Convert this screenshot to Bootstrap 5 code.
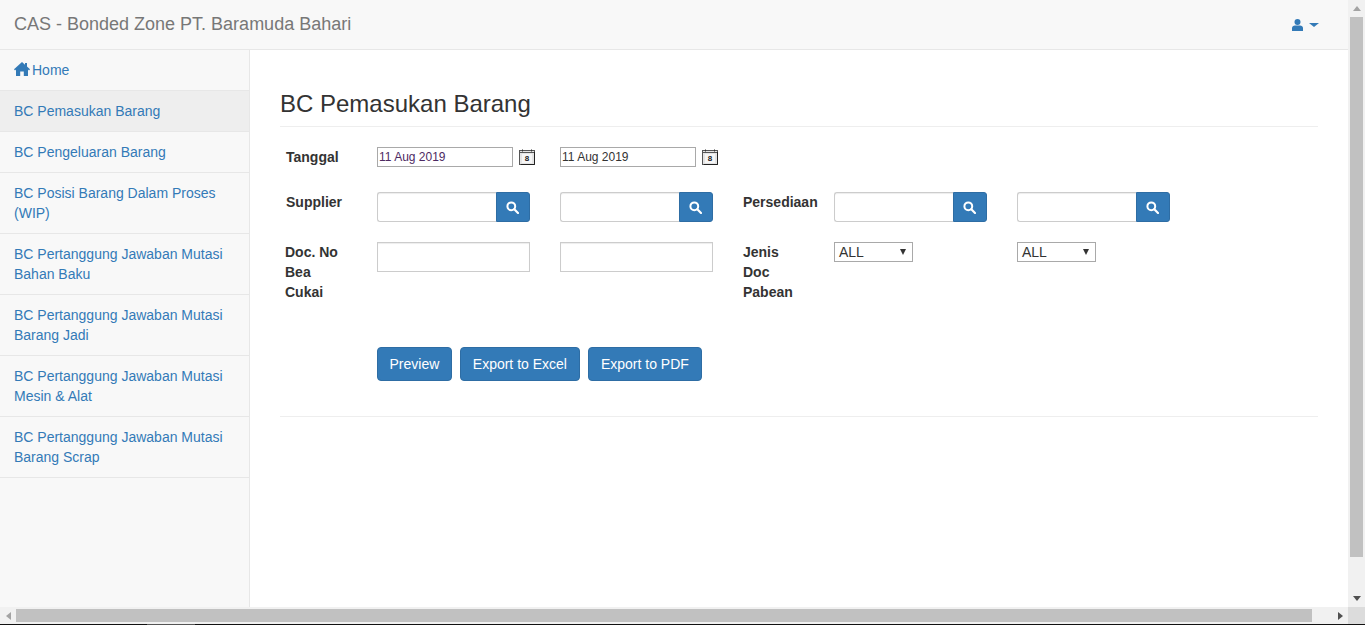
<!DOCTYPE html>
<html lang="en">
<head>
  <meta charset="UTF-8"/>
  <meta name="viewport" content="width=device-width, initial-scale=1.0"/>
  <title>CAS - Bonded Zone</title>
  <link href="https://cdn.jsdelivr.net/npm/bootstrap@5.3.0/dist/css/bootstrap.min.css" rel="stylesheet"/>
  <style>
    html, body { height: 100%; overflow: hidden; }
    body { font-family: "Liberation Sans", Arial, sans-serif; font-size: 14px; line-height: 20px; color: #333; background: #fff; }
    a { color: #337ab7; text-decoration: none; }

    .app-shell { height: 625px; }
    .upper-part { min-height: 0; }
    .page-area { width: 1348px; min-height: 0; }
    .top-bar { height: 50px; background: #f8f8f8; border-bottom: 1px solid #e7e7e7; padding: 0 29px 0 14px; }
    .top-brand { font-size: 18px; color: #777; padding-bottom: 2px; }
    .user-link { color: #337ab7; }
    .caret-down { width: 0; height: 0; border-left: 5px solid transparent; border-right: 5px solid transparent; border-top: 4px solid #337ab7; margin-left: 6px; }

    .lower-part { min-height: 0; }
    .side-nav { width: 250px; background: #f8f8f8; border-right: 1px solid #e7e7e7; }
    .side-nav a { display: block; padding: 10px 14px; border-bottom: 1px solid #e7e7e7; }
    .side-nav a.is-current { background: #eee; }
    .home-icon { vertical-align: -1px; margin-right: 2px; }

    .main-pane { padding: 0 30px; }
    .pane-title { font-size: 24px; line-height: 26px; font-weight: 400; margin: 41px 0 0; padding-bottom: 9px; border-bottom: 1px solid #eee; color: #333; }

    .filter-grid { display: grid; grid-template-columns: 97px 183px 183px 91px 183px 183px; }
    .filter-label { font-weight: 700; padding-left: 6px; }
    .filter-label.flush { padding-left: 5px; }
    .filter-label.flush-right { padding-left: 0; }
    .date-row { height: 20px; margin-top: 20px; }
    .search-row { margin-top: 25px; height: 30px; }
    .doc-row { margin-top: 20px; height: 60px; }

    .date-input { width: 136px; height: 20px; font: 12px/16px "Liberation Sans", Arial, sans-serif; color: #333; border: 1px solid #a9a9a9; padding: 1px 1px; background: #fff; }
    .date-input.is-edited { color: #4d2a63; }
    .cal-icon { margin-left: 6px; }
    .text-box { width: 153px; height: 30px; border: 1px solid #ccc; background: #fff; padding: 5px 10px; box-shadow: inset 0 1px 1px rgba(0,0,0,.075); }
    .search-box { width: 153px; height: 30px; }
    .search-box .text-box { width: 119px; border-right: 0; border-radius: 3px 0 0 3px; }
    .search-btn { width: 34px; height: 30px; padding: 0 2px 0 0; background: #337ab7; border: 1px solid #2e6da4; border-radius: 0 3px 3px 0; }
    .pick-box { width: 79px; height: 20px; border: 1px solid #a9a9a9; padding: 0 1px 0 4px; font-size: 14px; line-height: 18px; color: #333; background: #fff; }
    .pick-arrow { width: 0; height: 0; border-left: 3.5px solid transparent; border-right: 3.5px solid transparent; border-top: 6px solid #333; margin-right: 5px; }

    .action-row { margin: 45px 0 0 97px; gap: 8px; }
    .action-btn { height: 34px; padding: 6px 12px; font-size: 14px; line-height: 20px; color: #fff; background: #337ab7; border: 1px solid #2e6da4; border-radius: 4px; }
    .action-btn:first-child { padding: 6px 11.5px; }
    .action-btn:hover { color: #fff; background: #286090; }
    .pane-rule { margin: 35px 0 0; border: 0; border-top: 1px solid #eee; opacity: 1; }

    .v-scroll { width: 17px; background: #f1f1f1; }
    .h-scroll { height: 17px; background: #f1f1f1; }
    .scroll-end { width: 16px; height: 17px; flex: none; }
    .v-thumb { width: 13px; height: 540px; margin: 0 auto; background: #c1c1c1; }
    .h-track { padding: 2px 0; }
    .h-thumb { width: 1296px; height: 13px; background: #c1c1c1; }
    .scroll-corner { width: 17px; background: #dcdcdc; }
    .bottom-line { height: 1px; background: #111; }
    .bottom-line span { display: block; width: 48px; height: 1px; margin-left: 147px; background: #555; }
  </style>
</head>
<body>
  <div class="app-shell d-flex flex-column">
    <div class="upper-part d-flex flex-grow-1">
      <div class="page-area d-flex flex-column">
        <nav class="top-bar d-flex align-items-center justify-content-between">
          <span class="top-brand">CAS - Bonded Zone PT. Baramuda Bahari</span>
          <a href="#" class="user-link d-flex align-items-center">
            <svg width="11" height="12" viewBox="0 0 11 12"><circle cx="5.5" cy="3" r="3" fill="#337ab7"/><path d="M0 12V9C0 7.3 1.4 6.4 2.9 6.4h5.2C9.6 6.4 11 7.3 11 9v3z" fill="#337ab7"/></svg>
            <span class="caret-down"></span>
          </a>
        </nav>
        <div class="lower-part d-flex flex-grow-1">
          <aside class="side-nav flex-shrink-0">
            <a href="#"><svg class="home-icon" width="16" height="14" viewBox="0 0 16 14"><path d="M8 0 11 2.7V1h2v3.5L16 7.3l-1 1.1-1-.9V14H9.8V9.5H6.2V14H2V7.5l-1 .9-1-1.1z" fill="#337ab7"/></svg>Home</a>
            <a href="#" class="is-current">BC Pemasukan Barang</a>
            <a href="#">BC Pengeluaran Barang</a>
            <a href="#">BC Posisi Barang Dalam Proses (WIP)</a>
            <a href="#">BC Pertanggung Jawaban Mutasi Bahan Baku</a>
            <a href="#">BC Pertanggung Jawaban Mutasi Barang Jadi</a>
            <a href="#">BC Pertanggung Jawaban Mutasi Mesin &amp; Alat</a>
            <a href="#">BC Pertanggung Jawaban Mutasi Barang Scrap</a>
          </aside>
          <main class="main-pane flex-grow-1">
            <h1 class="pane-title">BC Pemasukan Barang</h1>

            <div class="filter-grid date-row">
              <div class="filter-label">Tanggal</div>
              <div class="d-flex align-items-center"><input class="date-input is-edited" value="11 Aug 2019"/>
                <svg class="cal-icon" width="16" height="16" viewBox="0 0 16 16"><rect x=".5" y="1.5" width="15" height="14" fill="#e4e4e4" stroke="#555"/><path d="M1 3.5h14" stroke="#555"/><path d="M3.5 .5v2M12.5 .5v2" stroke="#333"/><rect x="3" y="5" width="10" height="9" fill="#f6f6f6"/><path d="M15.5 3v12.5H2" fill="none" stroke="#222"/><text x="8" y="12.4" text-anchor="middle" font-size="8" font-weight="700" font-family="Liberation Sans" fill="#222">8</text></svg>
              </div>
              <div class="d-flex align-items-center"><input class="date-input" value="11 Aug 2019"/>
                <svg class="cal-icon" width="16" height="16" viewBox="0 0 16 16"><rect x=".5" y="1.5" width="15" height="14" fill="#e4e4e4" stroke="#555"/><path d="M1 3.5h14" stroke="#555"/><path d="M3.5 .5v2M12.5 .5v2" stroke="#333"/><rect x="3" y="5" width="10" height="9" fill="#f6f6f6"/><path d="M15.5 3v12.5H2" fill="none" stroke="#222"/><text x="8" y="12.4" text-anchor="middle" font-size="8" font-weight="700" font-family="Liberation Sans" fill="#222">8</text></svg>
              </div>
            </div>

            <div class="filter-grid search-row">
              <div class="filter-label">Supplier</div>
              <div class="search-box d-flex"><input class="text-box"/><button class="search-btn d-flex align-items-center justify-content-center"><svg width="13" height="13" viewBox="0 0 13 13"><circle cx="5.3" cy="5.3" r="3.9" fill="none" stroke="#fff" stroke-width="2"/><path d="M8.3 8.3 12 12" stroke="#fff" stroke-width="2.2" stroke-linecap="round"/></svg></button></div>
              <div class="search-box d-flex"><input class="text-box"/><button class="search-btn d-flex align-items-center justify-content-center"><svg width="13" height="13" viewBox="0 0 13 13"><circle cx="5.3" cy="5.3" r="3.9" fill="none" stroke="#fff" stroke-width="2"/><path d="M8.3 8.3 12 12" stroke="#fff" stroke-width="2.2" stroke-linecap="round"/></svg></button></div>
              <div class="filter-label flush-right">Persediaan</div>
              <div class="search-box d-flex"><input class="text-box"/><button class="search-btn d-flex align-items-center justify-content-center"><svg width="13" height="13" viewBox="0 0 13 13"><circle cx="5.3" cy="5.3" r="3.9" fill="none" stroke="#fff" stroke-width="2"/><path d="M8.3 8.3 12 12" stroke="#fff" stroke-width="2.2" stroke-linecap="round"/></svg></button></div>
              <div class="search-box d-flex"><input class="text-box"/><button class="search-btn d-flex align-items-center justify-content-center"><svg width="13" height="13" viewBox="0 0 13 13"><circle cx="5.3" cy="5.3" r="3.9" fill="none" stroke="#fff" stroke-width="2"/><path d="M8.3 8.3 12 12" stroke="#fff" stroke-width="2.2" stroke-linecap="round"/></svg></button></div>
            </div>

            <div class="filter-grid doc-row">
              <div class="filter-label flush">Doc. No<br/>Bea<br/>Cukai</div>
              <div><input class="text-box"/></div>
              <div><input class="text-box"/></div>
              <div class="filter-label flush-right">Jenis<br/>Doc<br/>Pabean</div>
              <div><div class="pick-box d-flex align-items-center justify-content-between"><span>ALL</span><span class="pick-arrow"></span></div></div>
              <div><div class="pick-box d-flex align-items-center justify-content-between"><span>ALL</span><span class="pick-arrow"></span></div></div>
            </div>

            <div class="action-row d-flex">
              <button class="btn action-btn">Preview</button>
              <button class="btn action-btn">Export to Excel</button>
              <button class="btn action-btn">Export to PDF</button>
            </div>
            <hr class="pane-rule"/>
          </main>
        </div>
      </div>
      <div class="v-scroll d-flex flex-column">
        <div class="scroll-end d-flex align-items-center justify-content-center w-100"><svg width="8" height="5" viewBox="0 0 8 5"><path d="M4 0 8 5H0z" fill="#a3a3a3"/></svg></div>
        <div class="v-thumb"></div>
        <div class="flex-grow-1"></div>
        <div class="scroll-end d-flex align-items-center justify-content-center w-100"><svg width="8" height="5" viewBox="0 0 8 5"><path d="M0 0h8L4 5z" fill="#505050"/></svg></div>
      </div>
    </div>
    <div class="d-flex h-scroll">
      <div class="d-flex flex-grow-1 align-items-stretch">
        <div class="scroll-end d-flex align-items-center justify-content-center"><svg width="5" height="8" viewBox="0 0 5 8"><path d="M5 0v8L0 4z" fill="#a3a3a3"/></svg></div>
        <div class="h-track flex-grow-1"><div class="h-thumb"></div></div>
        <div class="scroll-end d-flex align-items-center justify-content-center"><svg width="5" height="8" viewBox="0 0 5 8"><path d="M0 0v8l5-4z" fill="#505050"/></svg></div>
      </div>
      <div class="scroll-corner"></div>
    </div>
    <div class="bottom-line"><span></span></div>
  </div>
  <script src="https://cdn.jsdelivr.net/npm/bootstrap@5.3.0/dist/js/bootstrap.bundle.min.js"></script>
</body>
</html>
